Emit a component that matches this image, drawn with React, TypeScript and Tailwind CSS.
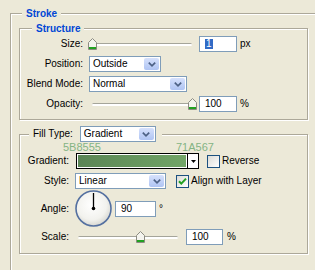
const Thumb = () => (
  <svg width="9" height="12" viewBox="0 0 9 12">
    <path d="M0.5 4.5 L4.5 0.5 L8.5 4.5 V11.5 H0.5 Z" fill="#F4F4EE" stroke="#8C8C82" />
    <rect x="1" y="9" width="7" height="2" fill="#21A121" />
  </svg>
);

function Slider({ className, thumb }: { className: string; thumb: string }) {
  return (
    <div className={`relative h-[12px] ${className}`}>
      <div className="absolute left-[4px] right-[4px] top-[5px] h-[3px] rounded-full border-t border-[#A5A59A] bg-white" />
      <div className={`absolute top-0 ${thumb}`}>
        <Thumb />
      </div>
    </div>
  );
}

function Select({ value, className }: { value: string; className: string }) {
  return (
    <div className={`flex h-[16px] items-center border border-[#7F9DB9] bg-white pl-[3px] ${className}`}>
      <span className="flex-1 leading-none">{value}</span>
      <span className="mr-[1px] flex h-[12px] w-[15px] items-center justify-center rounded-[2px] bg-gradient-to-b from-[#D6E1FC] to-[#AFC4F3]">
        <svg width="8" height="5" viewBox="0 0 8 5">
          <path d="M0.8 0.6 L4 3.8 L7.2 0.6" stroke="#4D6185" strokeWidth="1.7" fill="none" />
        </svg>
      </span>
    </div>
  );
}

function Field({ children, className }: { children: React.ReactNode; className: string }) {
  return (
    <div className={`flex h-[16px] items-center border border-[#7F9DB9] bg-white pl-[5px] leading-none ${className}`}>
      {children}
    </div>
  );
}

function Check({ checked }: { checked?: boolean }) {
  return (
    <span className="flex h-[13px] w-[13px] items-center justify-center border border-[#1C5180] bg-gradient-to-br from-[#DCDCD7] to-white">
      {checked && (
        <svg width="9" height="9" viewBox="0 0 9 9">
          <path d="M1 4.2 L3.3 6.6 L8 1.6" stroke="#21A121" strokeWidth="2" fill="none" />
        </svg>
      )}
    </span>
  );
}

const Dial = () => (
  <svg width="37" height="37" viewBox="0 0 37 37">
    <defs>
      <radialGradient id="dial" cx="45%" cy="40%" r="60%">
        <stop offset="0%" stopColor="#FFFFFF" />
        <stop offset="70%" stopColor="#F2F2EE" />
        <stop offset="100%" stopColor="#D8D8D2" />
      </radialGradient>
    </defs>
    <circle cx="18.5" cy="18.5" r="17.5" fill="url(#dial)" stroke="#5470A0" strokeWidth="1.6" />
    <line x1="18.5" y1="18.5" x2="18.5" y2="3" stroke="#000" strokeWidth="1.3" />
    <circle cx="18.5" cy="18.5" r="1.8" fill="#000" />
  </svg>
);

const etched = "border border-[#ACA899] shadow-[inset_1px_1px_0_#fff,1px_1px_0_#fff]";

export default function App() {
  return (
    <div className="h-[270px] w-[315px] overflow-hidden bg-[#ECE9D8] pl-[10px] pt-[7px] font-['Liberation_Sans',Arial,sans-serif] text-[10px] leading-[12px] text-black">
      <fieldset className={`h-[300px] w-[330px] ${etched}`}>
        <legend className="ml-[11px] bg-[#ECE9D8] px-1 font-bold leading-[13px] text-[#0046D5]">Stroke</legend>

        <fieldset className={`ml-[8px] mt-[2px] w-[289px] ${etched}`}>
          <legend className="ml-[12px] bg-[#ECE9D8] px-1 font-bold leading-[13px] text-[#0046D5]">Structure</legend>
          <div className="flex flex-col gap-[4px] pb-[7px] pt-[1px]">
            <div className="flex h-[16px] items-center">
              <span className="w-[63px] text-right">Size:</span>
              <Slider className="ml-[5px] w-[108px]" thumb="left-0" />
              <Field className="ml-[3px] w-[38px]">
                <span className="bg-[#316AC5] px-[1px] text-white">1</span>
              </Field>
              <span className="ml-[3px]">px</span>
            </div>
            <div className="flex h-[16px] items-center">
              <span className="w-[63px] text-right">Position:</span>
              <Select value="Outside" className="ml-[6px] w-[72px]" />
            </div>
            <div className="flex h-[16px] items-center">
              <span className="w-[63px] text-right">Blend Mode:</span>
              <Select value="Normal" className="ml-[6px] w-[98px]" />
            </div>
            <div className="flex h-[16px] items-center">
              <span className="w-[63px] text-right">Opacity:</span>
              <Slider className="ml-[5px] w-[108px]" thumb="left-[100px]" />
              <Field className="ml-[3px] w-[38px]">100</Field>
              <span className="ml-[3px]">%</span>
            </div>
          </div>
        </fieldset>

        <fieldset className={`ml-[8px] mt-[6px] w-[289px] ${etched}`}>
          <legend className="ml-[9px] bg-[#ECE9D8] pl-[4px] pr-[6px]">
            <div className="flex items-center">
              <span>Fill Type:</span>
              <Select value="Gradient" className="ml-[7px] w-[76px]" />
            </div>
          </legend>
          <div className="flex flex-col pb-[8px]">
            <div className="flex h-[10px] text-[11px] leading-[10px] text-[#84B484]">
              <span className="ml-[43px] w-[113px]">5B8555</span>
              <span>71A567</span>
            </div>
            <div className="mt-[1px] flex h-[16px] items-center">
              <span className="w-[49px] text-right">Gradient:</span>
              <div className="ml-[7px] flex h-[16px] w-[123px] border border-black bg-white">
                <div className="m-[1px] flex-1 bg-gradient-to-r from-[#5B8555] to-[#71A567]" />
                <div className="flex w-[11px] items-center justify-center border-l border-black">
                  <svg width="5" height="3" viewBox="0 0 5 3">
                    <path d="M0 0 H5 L2.5 3 Z" fill="#000" />
                  </svg>
                </div>
              </div>
              <span className="ml-[8px]">
                <Check />
              </span>
              <span className="ml-[2px]">Reverse</span>
            </div>
            <div className="mt-[4px] flex h-[16px] items-center">
              <span className="w-[49px] text-right">Style:</span>
              <Select value="Linear" className="ml-[6px] w-[91px]" />
              <span className="ml-[10px]">
                <Check checked />
              </span>
              <span className="ml-[2px]">Align with Layer</span>
            </div>
            <div className="mt-[1px] flex h-[37px] items-center">
              <span className="w-[49px] text-right">Angle:</span>
              <span className="ml-[6px]">
                <Dial />
              </span>
              <Field className="ml-[3px] w-[41px]">90</Field>
              <span className="ml-[3px]">°</span>
            </div>
            <div className="mt-[2px] flex h-[16px] items-center">
              <span className="w-[49px] text-right">Scale:</span>
              <Slider className="ml-[5px] w-[108px]" thumb="left-[62px]" />
              <Field className="ml-[4px] w-[37px]">100</Field>
              <span className="ml-[4px]">%</span>
            </div>
          </div>
        </fieldset>
      </fieldset>
    </div>
  );
}
